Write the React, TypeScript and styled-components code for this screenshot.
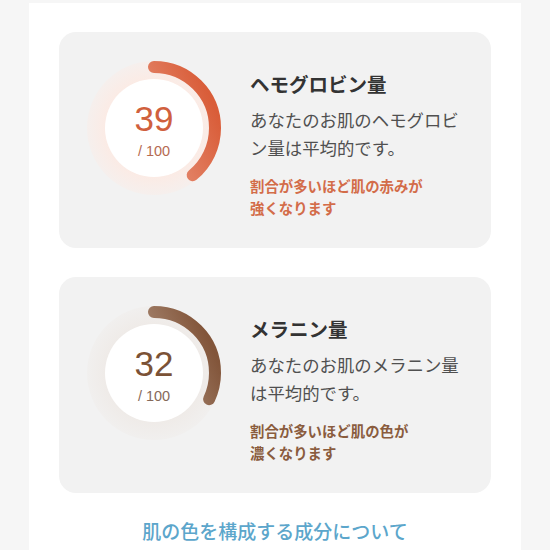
import styled, { createGlobalStyle } from 'styled-components';

const GlobalStyle = createGlobalStyle`
  html, body {
    margin: 0;
    padding: 0;
    background: #f6f6f6;
  }
  body {
    font-family: "Noto Sans CJK JP", "Noto Sans", sans-serif;
  }
`;

const Page = styled.div`
  width: 492px;
  margin: 3px auto 0;
  min-height: 547px;
  background: #ffffff;
  padding: 29px 30px 0;
  box-sizing: border-box;
  display: flex;
  flex-direction: column;
  gap: 29px;
`;

const Card = styled.div`
  display: flex;
  align-items: flex-start;
  gap: 28px;
  padding: 28px 20px 29px 27px;
  background: #f2f2f2;
  border-radius: 17px;
`;

const Ring = styled.div`
  display: grid;
  width: 136px;
  height: 136px;
  flex-shrink: 0;

  & > * {
    grid-area: 1 / 1;
  }
`;

const Score = styled.div`
  display: flex;
  flex-direction: column;
  align-items: center;
  justify-content: center;
  padding-top: 4px;
  gap: 5px;
  font-family: "Liberation Sans", Arial, sans-serif;
`;

const ScoreValue = styled.span<{ color: string }>`
  font-size: 35px;
  line-height: 36px;
  color: ${props => props.color};
`;

const ScoreMax = styled.span<{ color: string }>`
  font-size: 14.5px;
  line-height: 18px;
  color: ${props => props.color};
`;

const TextColumn = styled.div`
  width: 216px;
  margin-top: 10px;
`;

const Title = styled.h2`
  margin: 0;
  font-size: 19.5px;
  line-height: 28px;
  font-weight: 700;
  color: #333333;
`;

const Description = styled.p`
  margin: 8px 0 0;
  font-size: 17.4px;
  line-height: 28px;
  color: #505050;
`;

const Note = styled.p<{ color: string }>`
  margin: 13px 0 0;
  font-size: 14.4px;
  line-height: 22px;
  font-weight: 700;
  color: ${props => props.color};
`;

const LinkText = styled.a`
  display: block;
  margin-top: -5px;
  text-align: center;
  font-size: 19px;
  line-height: 28px;
  font-weight: 500;
  color: #5ca6cb;
  text-decoration: none;
`;

interface Palette {
  track: string;
  from: string;
  to: string;
  value: string;
  max: string;
  note: string;
}

const red: Palette = {
  track: '#fbebe5',
  from: '#efb2a0',
  to: '#d95d39',
  value: '#d0603d',
  max: '#b56a52',
  note: '#d36c49',
};

const brown: Palette = {
  track: '#efebe8',
  from: '#d0bdae',
  to: '#82553a',
  value: '#7b5236',
  max: '#86695a',
  note: '#8a5c3e',
};

interface ScoreRingProps {
  id: string;
  value: number;
  palette: Palette;
}

const ScoreRing: React.FC<ScoreRingProps> = ({ id, value, palette }) => {
  const r = 61;
  const circumference = 2 * Math.PI * r;
  const length = (circumference * value) / 100;

  return (
    <Ring>
      <svg width="136" height="136" viewBox="0 0 136 136">
        <defs>
          <linearGradient id={`${id}-arc`} gradientUnits="userSpaceOnUse" x1="60" y1="0" x2="112" y2="118">
            <stop offset="0" stopColor={palette.from} />
            <stop offset="1" stopColor={palette.to} />
          </linearGradient>
          <radialGradient id={`${id}-glow`} cx="68" cy="68" r="68" gradientUnits="userSpaceOnUse">
            <stop offset="0.72" stopColor={palette.track} />
            <stop offset="1" stopColor={palette.track} stopOpacity="0.35" />
          </radialGradient>
        </defs>
        <circle cx="68" cy="68" r="67" fill={`url(#${id}-glow)`} />
        <circle cx="68" cy="68" r="49" fill="#ffffff" />
        <circle
          cx="68"
          cy="68"
          r={r}
          fill="none"
          stroke={`url(#${id}-arc)`}
          strokeWidth="12"
          strokeLinecap="round"
          strokeDasharray={`${length} ${circumference}`}
          transform="rotate(-90 68 68)"
        />
      </svg>
      <Score>
        <ScoreValue color={palette.value}>{value}</ScoreValue>
        <ScoreMax color={palette.max}>/ 100</ScoreMax>
      </Score>
    </Ring>
  );
};

const App = () => {
  return (
    <>
      <GlobalStyle />
      <Page>
        <Card>
          <ScoreRing id="hemoglobin" value={39} palette={red} />
          <TextColumn>
            <Title>ヘモグロビン量</Title>
            <Description>あなたのお肌のヘモグロビン量は平均的です。</Description>
            <Note color={red.note}>割合が多いほど肌の赤みが<br />強くなります</Note>
          </TextColumn>
        </Card>
        <Card>
          <ScoreRing id="melanin" value={32} palette={brown} />
          <TextColumn>
            <Title>メラニン量</Title>
            <Description>あなたのお肌のメラニン量は平均的です。</Description>
            <Note color={brown.note}>割合が多いほど肌の色が<br />濃くなります</Note>
          </TextColumn>
        </Card>
        <LinkText href="#">肌の色を構成する成分について</LinkText>
      </Page>
    </>
  );
};

export default App;
